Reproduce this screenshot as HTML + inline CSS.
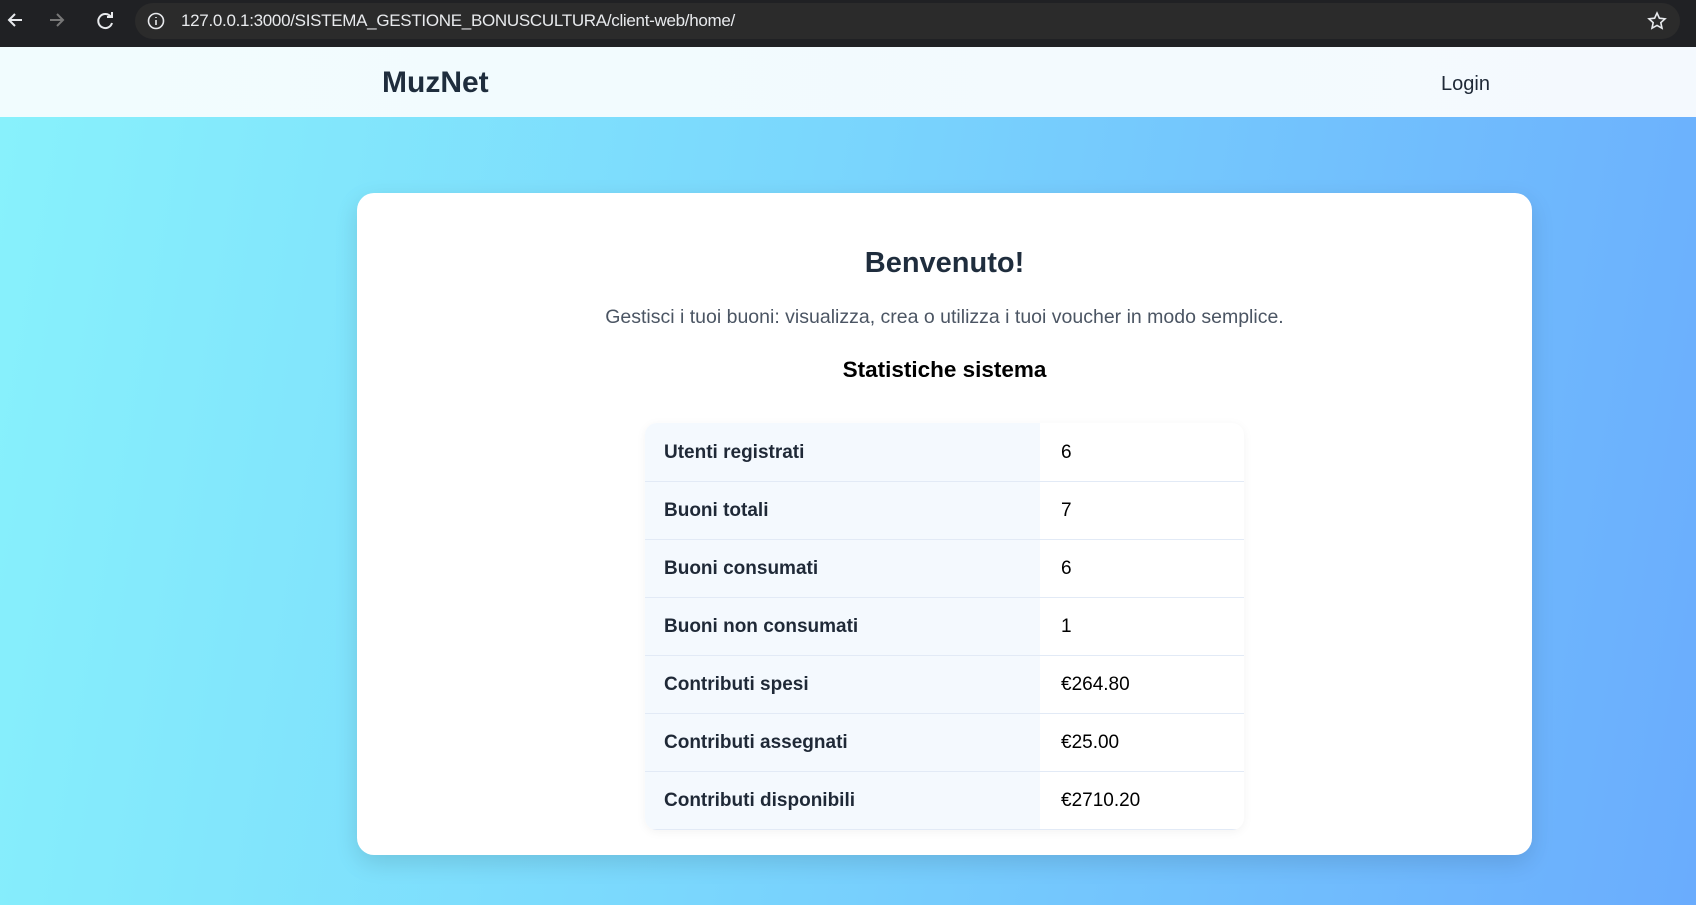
<!DOCTYPE html>
<html><head><meta charset="utf-8"><style>
*{margin:0;padding:0;box-sizing:border-box}
body{width:1696px;height:905px;overflow:hidden;font-family:"Liberation Sans",sans-serif;background:linear-gradient(100deg,#88f2fc 0%,#7ad7fd 45%,#6aacfd 100%);position:relative}
.chrome{position:absolute;left:0;top:0;width:1696px;height:47px;background:#202124}
.url{position:absolute;left:135px;top:3px;width:1545px;height:36px;border-radius:18px;background:#2b2b2b}
.url span{position:absolute;left:46px;top:8px;color:#e8eaed;font-size:17px;letter-spacing:-0.3px}
.nav{position:absolute;left:0;top:47px;width:1696px;height:70px;background:linear-gradient(90deg,#f1fcfe,#f4f9fe)}
.logo{position:absolute;left:382px;top:19px;font-size:30px;font-weight:bold;color:#1f2d3d}
.login{position:absolute;left:1441px;top:26px;font-size:20px;color:#1f2937}
.card{position:absolute;left:357px;top:193px;width:1175px;height:662px;background:#fff;border-radius:17px;box-shadow:0 8px 24px rgba(0,0,0,.12)}
h1{position:absolute;left:0;width:100%;top:54px;text-align:center;font-size:29px;color:#1f2d3d}
.sub{position:absolute;left:0;width:100%;top:113px;text-align:center;font-size:19.5px;color:#4b5563}
h2{position:absolute;left:0;width:100%;top:164px;text-align:center;font-size:22.5px;color:#000}
table{position:absolute;left:288px;top:230px;width:599px;border-collapse:collapse;border-radius:12px;overflow:hidden;box-shadow:0 2px 10px rgba(0,0,0,.05)}
td{height:58px;border-bottom:1px solid #e2eaf6;font-size:19px;padding-top:2px}
td:first-child{width:395px;background:#f4f9fe;padding-left:19px;font-weight:bold;color:#1f2937}
td:last-child{padding-left:21px;color:#000}
</style></head><body>
<div class="chrome">
<svg style="position:absolute;left:4px;top:8px" width="110" height="24" fill="none" stroke-width="2"><path d="M18 12H6M11 6l-6 6 6 6" stroke="#e8eaed"/><path d="M46 12h12M53 6l6 6-6 6" stroke="#777"/><path d="M107 9a7 7 0 1 0 1 6M108 4v5h-5" stroke="#e8eaed"/></svg>
<div class="url"><svg style="position:absolute;left:12px;top:9px" width="18" height="18" fill="none" stroke="#e8eaed" stroke-width="1.6"><circle cx="9" cy="9" r="7.5"/><path d="M9 8v5M9 5v1"/></svg><span>127.0.0.1:3000/SISTEMA_GESTIONE_BONUSCULTURA/client-web/home/</span>
<svg style="position:absolute;left:1512px;top:8px" width="20" height="20" fill="none" stroke="#e8eaed" stroke-width="1.6"><path d="M10 2l2.4 5.2 5.6.6-4.2 3.8 1.2 5.6L10 14.4 5 17.2l1.2-5.6L2 7.8l5.6-.6z"/></svg></div>
</div>
<div class="nav"><div class="logo">MuzNet</div><div class="login">Login</div></div>
<div class="card">
<h1>Benvenuto!</h1>
<div class="sub">Gestisci i tuoi buoni: visualizza, crea o utilizza i tuoi voucher in modo semplice.</div>
<h2>Statistiche sistema</h2>
<table>
<tr><td>Utenti registrati</td><td>6</td></tr>
<tr><td>Buoni totali</td><td>7</td></tr>
<tr><td>Buoni consumati</td><td>6</td></tr>
<tr><td>Buoni non consumati</td><td>1</td></tr>
<tr><td>Contributi spesi</td><td>€264.80</td></tr>
<tr><td>Contributi assegnati</td><td>€25.00</td></tr>
<tr><td>Contributi disponibili</td><td>€2710.20</td></tr>
</table>
</div>
</body></html>
